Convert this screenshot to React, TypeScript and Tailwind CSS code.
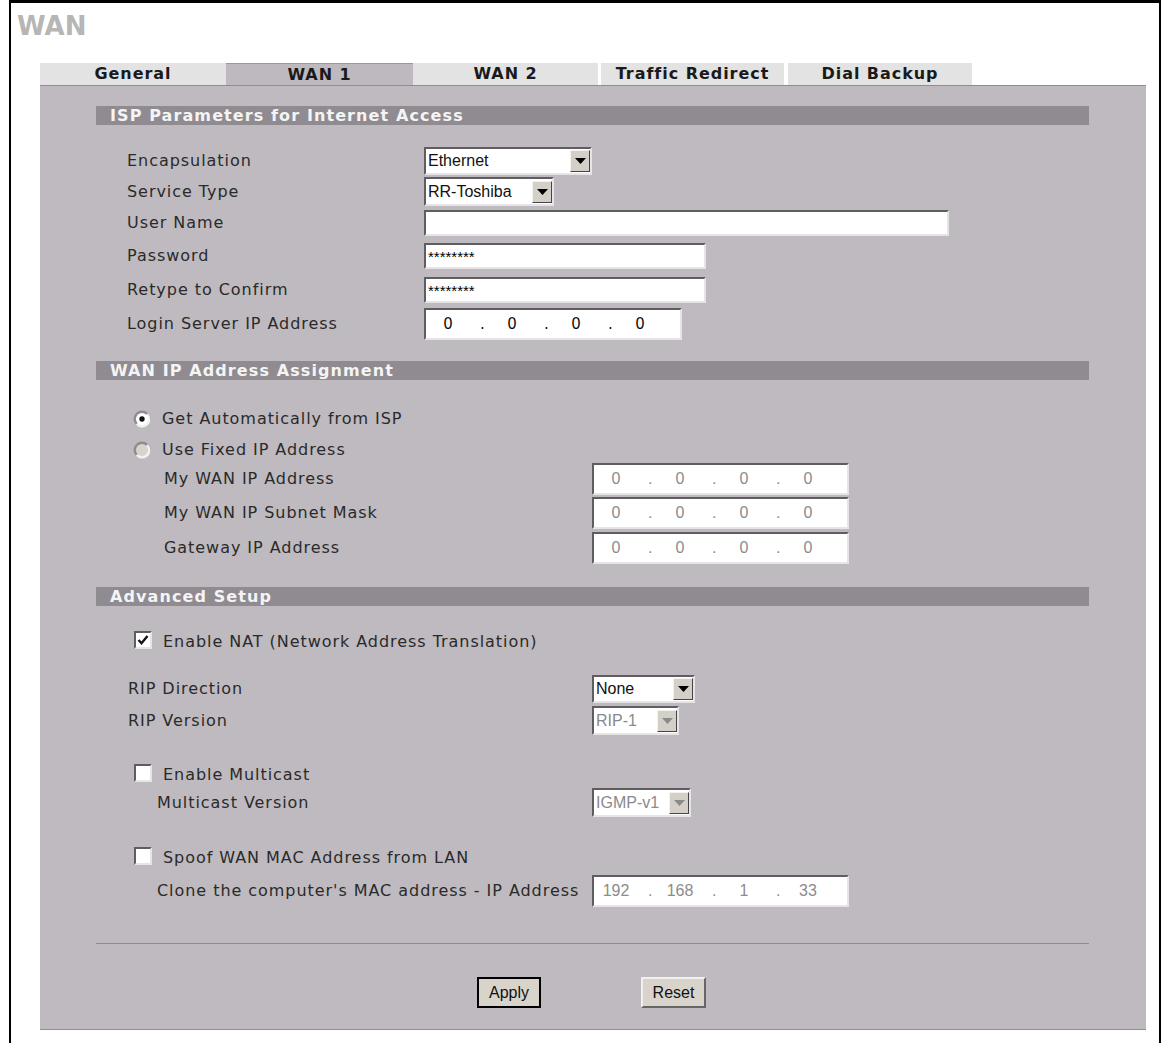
import type { ReactNode } from "react";

const sans = "font-['DejaVu_Sans',sans-serif]";
const arial = "font-['Liberation_Sans',Arial,sans-serif] tracking-normal";
const inset = "border-2 border-t-[#5f5d60] border-l-[#5f5d60] border-r-[#e6e4e6] border-b-[#e6e4e6]";

const tabs = [
  { label: "General", className: "w-[186px]", active: false },
  { label: "WAN 1", className: "w-[187px]", active: true },
  { label: "WAN 2", className: "w-[185px]", active: false },
  { label: "Traffic Redirect", className: "ml-[3px] w-[183px]", active: false },
  { label: "Dial Backup", className: "ml-[4px] w-[184px]", active: false },
];

function SectionBar({ children }: { children: ReactNode }) {
  return (
    <div className="flex h-[19px] items-center bg-[#8f8b90] pl-[14px] text-[16px] font-bold tracking-[1.1px] text-[#f4f4f4]">
      {children}
    </div>
  );
}

function Select({ value, className, disabled }: { value: string; className: string; disabled?: boolean }) {
  return (
    <div className={`flex h-full items-center justify-between bg-white ${inset} ${className}`}>
      <span className={`${arial} pl-[2px] text-[16px] ${disabled ? "text-[#8a8a8a]" : "text-[#111]"}`}>{value}</span>
      <span className="flex h-[22px] w-[20px] items-center justify-center border border-t-[#f4f2ec] border-l-[#f4f2ec] border-r-[#444] border-b-[#444] bg-[#d4d0c8]">
        <svg width="11" height="6" viewBox="0 0 11 6">
          <path d="M0 0h11L5.5 6z" fill={disabled ? "#8a8a8a" : "#000"} />
        </svg>
      </span>
    </div>
  );
}

function TextBox({ value, className }: { value?: string; className: string }) {
  return (
    <input
      readOnly
      value={value ?? ""}
      className={`block h-full bg-white pl-[2px] ${arial} text-[15px] text-black outline-none ${inset} ${className}`}
    />
  );
}

function IpBox({ parts, className, disabled }: { parts: string[]; className: string; disabled?: boolean }) {
  return (
    <div
      className={`flex h-full items-center bg-white pl-[6px] ${inset} ${className} ${
        disabled ? `${arial} text-[16px] text-[#8c8c8c]` : `${sans} text-[15px] tracking-normal text-[#111]`
      }`}
    >
      {parts.map((p, i) => (
        <span key={i} className="flex w-[64px] shrink-0 items-center">
          <span className="w-[32px] text-center">{p}</span>
          {i < 3 && <span className="ml-[16px]">.</span>}
        </span>
      ))}
    </div>
  );
}

function Radio({ checked }: { checked?: boolean }) {
  return (
    <svg width="18" height="18" viewBox="0 0 16 16" className="-ml-[1px] shrink-0">
      <circle cx="8" cy="8" r="7.5" fill="#8f8d90" />
      <path d="M2.5 13.2A7.4 7.4 0 0 0 15.4 8 7.4 7.4 0 0 0 13.2 2.8z" fill="#f2f1f2" />
      <circle cx="8" cy="8" r="5.4" fill={checked ? "#fff" : "#d6d4cc"} />
      {checked && <circle cx="8" cy="8" r="2.4" fill="#111" />}
    </svg>
  );
}

function Checkbox({ checked }: { checked?: boolean }) {
  return (
    <span className={`-mt-[4px] flex h-[18px] w-[18px] shrink-0 items-center justify-center bg-white ${inset}`}>
      {checked && (
        <svg width="12" height="12" viewBox="0 0 12 12">
          <path d="M1.5 6l3 3.2L10.5 2" fill="none" stroke="#111" strokeWidth="2.4" />
        </svg>
      )}
    </span>
  );
}

function Row({ label, className, labelClass, children }: {
  label: string;
  className: string;
  labelClass: string;
  children?: ReactNode;
}) {
  return (
    <div className={`flex items-center ${className}`}>
      <div className={`whitespace-nowrap ${labelClass}`}>{label}</div>
      {children}
    </div>
  );
}

function Toggle({ children, label, className }: { children: ReactNode; label: string; className: string }) {
  return (
    <div className={`flex items-center gap-[11px] pl-[38px] ${className}`}>
      {children}
      <span className="whitespace-nowrap">{label}</span>
    </div>
  );
}

export default function App() {
  return (
    <div className="h-[1043px] w-[1162px] overflow-hidden bg-white">
      <div className={`ml-[9px] h-[1043px] w-[1152px] border-x-2 border-t-[3px] border-black ${sans} text-[16px] tracking-[0.95px] text-[#2a2a2a]`}>
        <h1 className="pl-[6px] pt-[10px] text-[26px] leading-[26px] font-bold tracking-normal text-[#b6b6b6]">WAN</h1>

        <div className="ml-[29px] mt-[24px] flex h-[22px]">
          {tabs.map((t) => (
            <div
              key={t.label}
              className={`flex items-center justify-center text-[16px] font-bold text-[#1a1a1a] ${t.className} ${
                t.active ? "border-t border-[#9a979b] bg-[#bdb9be]" : "bg-[#e3e3e3]"
              }`}
            >
              {t.label}
            </div>
          ))}
        </div>

        <div className="ml-[29px] h-[945px] w-[1106px] border-y border-[#8f8d90] bg-[#bebabf] pl-[56px] pr-[57px] pt-[20px]">
          <SectionBar>ISP Parameters for Internet Access</SectionBar>

          <Row label="Encapsulation" className="mt-[22px] h-[28px]" labelClass="w-[328px] pl-[31px]">
            <Select value="Ethernet" className="w-[168px]" />
          </Row>
          <Row label="Service Type" className="mt-[2px] h-[29px]" labelClass="w-[328px] pl-[31px]">
            <Select value="RR-Toshiba" className="w-[130px]" />
          </Row>
          <Row label="User Name" className="mt-[4px] h-[26px]" labelClass="w-[328px] pl-[31px]">
            <TextBox className="w-[525px]" />
          </Row>
          <Row label="Password" className="mt-[7px] h-[26px]" labelClass="w-[328px] pl-[31px]">
            <TextBox value="********" className="w-[282px]" />
          </Row>
          <Row label="Retype to Confirm" className="mt-[8px] h-[26px]" labelClass="w-[328px] pl-[31px]">
            <TextBox value="********" className="w-[282px]" />
          </Row>
          <Row label="Login Server IP Address" className="mt-[5px] h-[32px]" labelClass="w-[328px] pl-[31px]">
            <IpBox parts={["0", "0", "0", "0"]} className="w-[258px]" />
          </Row>

          <div className="mt-[21px]">
            <SectionBar>WAN IP Address Assignment</SectionBar>
          </div>

          <Toggle label="Get Automatically from ISP" className="mt-[23px] h-[31px]">
            <Radio checked />
          </Toggle>
          <Toggle label="Use Fixed IP Address" className="h-[29px] pt-[3px]">
            <Radio />
          </Toggle>
          <Row label="My WAN IP Address" className="h-[32px]" labelClass="w-[496px] pl-[68px]">
            <IpBox parts={["0", "0", "0", "0"]} className="w-[257px]" disabled />
          </Row>
          <Row label="My WAN IP Subnet Mask" className="mt-[2px] h-[32px]" labelClass="w-[496px] pl-[68px]">
            <IpBox parts={["0", "0", "0", "0"]} className="w-[257px]" disabled />
          </Row>
          <Row label="Gateway IP Address" className="mt-[3px] h-[32px]" labelClass="w-[496px] pl-[68px]">
            <IpBox parts={["0", "0", "0", "0"]} className="w-[257px]" disabled />
          </Row>

          <div className="mt-[23px]">
            <SectionBar>Advanced Setup</SectionBar>
          </div>

          <Toggle label="Enable NAT (Network Address Translation)" className="mt-[20px] h-[32px]">
            <Checkbox checked />
          </Toggle>
          <Row label="RIP Direction" className="mt-[17px] h-[28px]" labelClass="w-[496px] pl-[32px]">
            <Select value="None" className="w-[103px]" />
          </Row>
          <Row label="RIP Version" className="mt-[3px] h-[29px]" labelClass="w-[496px] pl-[32px]">
            <Select value="RIP-1" className="w-[87px]" disabled />
          </Row>

          <Toggle label="Enable Multicast" className="mt-[30px] h-[20px]">
            <Checkbox />
          </Toggle>
          <Row label="Multicast Version" className="mt-[3px] h-[29px]" labelClass="w-[496px] pl-[61px]">
            <Select value="IGMP-v1" className="w-[99px]" disabled />
          </Row>

          <Toggle label="Spoof WAN MAC Address from LAN" className="mt-[31px] h-[20px]">
            <Checkbox />
          </Toggle>
          <Row label="Clone the computer's MAC address - IP Address" className="mt-[7px] h-[32px]" labelClass="w-[496px] pl-[61px]">
            <IpBox parts={["192", "168", "1", "33"]} className="w-[257px]" disabled />
          </Row>

          <div className="mt-[36px] h-px bg-[#8f8d90]" />

          <div className={`mt-[33px] flex pl-[381px] ${arial} text-[16px] text-[#111]`}>
            <button className="h-[31px] w-[64px] border-2 border-black bg-[#d8d4cc]">Apply</button>
            <button className="ml-[100px] h-[31px] w-[65px] border-2 border-t-[#f2f0ea] border-l-[#f2f0ea] border-r-[#666] border-b-[#666] bg-[#d8d4cc]">Reset</button>
          </div>
        </div>
      </div>
    </div>
  );
}
